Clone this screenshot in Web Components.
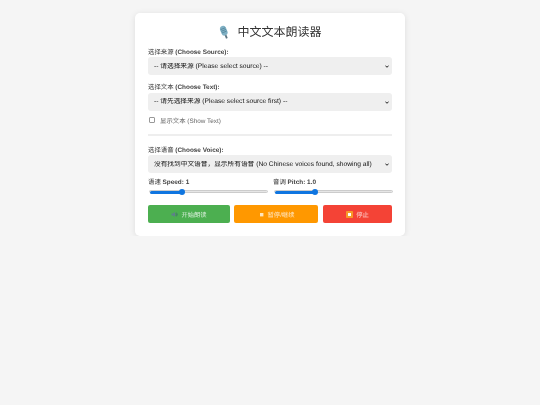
<!DOCTYPE html>
<html>
<head>
<meta charset="utf-8">
<title>中文文本朗读器</title>
<style>
    html, body { margin: 0; background: #f5f5f5; }
    body {
        font-family: "Liberation Sans", "Noto Sans CJK SC", sans-serif;
        padding-top: 13px;
        text-rendering: geometricPrecision;
    }
</style>
</head>
<body>
<duke-kort>
    <h-tittel>中文文本朗读器</h-tittel>
    <velg-felt kinesisk="选择来源" etikett="(Choose Source):" tekst="-- 请选择来源 (Please select source) --"></velg-felt>
    <velg-felt kinesisk="选择文本" etikett="(Choose Text):" tekst="-- 请先选择来源 (Please select source first) --"></velg-felt>
    <vis-tekst></vis-tekst>
    <skille-linje></skille-linje>
    <velg-felt kinesisk="选择语音" etikett="(Choose Voice):" tekst="没有找到中文语音，显示所有语音 (No Chinese voices found, showing all)"></velg-felt>
    <glider-rad></glider-rad>
    <knapp-rad></knapp-rad>
</duke-kort>
<script>
class DukeKort extends HTMLElement {
    constructor() {
        super()
        this.attachShadow({ mode: 'open' })
    }
    connectedCallback() {
        this.shadowRoot.innerHTML = `
            <style>
                :host {
                    display: block;
                    box-sizing: border-box;
                    width: 270px;
                    margin: 0 auto;
                    padding: 13px;
                    background: #fff;
                    border-radius: 5px;
                    box-shadow: 0 1px 6px rgba(0,0,0,0.1);
                    will-change: transform;
                }
            </style>
            <slot></slot>
        `
    }
}

class HTittel extends HTMLElement {
    constructor() {
        super()
        this.attachShadow({ mode: 'open' })
    }
    connectedCallback() {
        this.shadowRoot.innerHTML = `
            <style>
                :host {
                    display: flex;
                    justify-content: center;
                    align-items: center;
                    gap: 6px;
                    height: 13px;
                    margin-bottom: 8.5px;
                    font-size: 12px;
                    line-height: 13px;
                    color: #333;
                }
                svg { width: 13px; height: 15px; }
            </style>
            <svg viewBox="0 0 13 15">
                <g transform="rotate(-22 6.5 7.5)">
                    <rect x="3.4" y="0.6" width="6.2" height="10" rx="3.1" fill="#7fb0c4"/>
                    <path d="M4 3.4h5M4 5.2h5M4 7h5" stroke="#4f7f96" stroke-width=".7"/>
                    <rect x="5.6" y="10.4" width="1.8" height="3.4" fill="#5d7480"/>
                </g>
            </svg>
            <span><slot></slot></span>
        `
    }
}

class VelgFelt extends HTMLElement {
    constructor() {
        super()
        this.attachShadow({ mode: 'open' })
    }
    connectedCallback() {
        this.shadowRoot.innerHTML = `
            <style>
                :host { display: block; position: relative; margin-bottom: 8px; }
                label {
                    display: block;
                    font-size: 6.4px;
                    line-height: 9px;
                    font-weight: bold;
                    color: #444;
                    margin-bottom: .5px;
                }
                label span { font-weight: normal; color: #333; }
                select {
                    display: block;
                    appearance: none;
                    width: 100%;
                    height: 18px;
                    box-sizing: border-box;
                    border: none;
                    border-radius: 3px;
                    background-color: #efefef;
                    padding: 0 0 0 6px;
                    font: 6.7px "Liberation Sans", "Noto Sans CJK SC", sans-serif;
                    text-rendering: geometricPrecision;
                    color: #111;
                }
                svg {
                    position: absolute;
                    right: 3px;
                    bottom: 7px;
                    width: 4px;
                    height: 3px;
                    pointer-events: none;
                }
            </style>
            <label><span>${this.getAttribute('kinesisk')}</span> ${this.getAttribute('etikett')}</label>
            <select><option>${this.getAttribute('tekst')}</option></select>
            <svg viewBox="0 0 4 3"><path d="M.4.6L2 2.3 3.6.6" fill="none" stroke="#222" stroke-width="1"/></svg>
        `
    }
}

class VisTekst extends HTMLElement {
    constructor() {
        super()
        this.attachShadow({ mode: 'open' })
    }
    connectedCallback() {
        this.shadowRoot.innerHTML = `
            <style>
                :host {
                    display: flex;
                    align-items: center;
                    gap: 5px;
                    height: 8px;
                    margin-top: -2.5px;
                    padding-left: 1px;
                    font-size: 6.4px;
                    color: #666;
                }
                i {
                    display: block;
                    box-sizing: border-box;
                    width: 6px;
                    height: 6px;
                    border: .7px solid #999;
                    border-radius: 1px;
                    background: #fff;
                }
            </style>
            <i></i><span>显示文本 (Show Text)</span>
        `
    }
}

class SkilleLinje extends HTMLElement {
    constructor() {
        super()
        this.attachShadow({ mode: 'open' })
    }
    connectedCallback() {
        this.shadowRoot.innerHTML = `
            <style>
                :host {
                    display: block;
                    height: 2px;
                    margin: 10px 0 9.5px;
                    background: #eee;
                }
            </style>
        `
    }
}

class GliderRad extends HTMLElement {
    constructor() {
        super()
        this.attachShadow({ mode: 'open' })
    }
    glider(kinesisk, tekst, prosent) {
        return `
            <div class="glider">
                <div class="navn"><span>${kinesisk}</span> ${tekst}</div>
                <div class="spor">
                    <b style="width:${prosent}%"></b>
                    <u style="left:${prosent}%"></u>
                </div>
            </div>
        `
    }
    connectedCallback() {
        this.shadowRoot.innerHTML = `
            <style>
                :host {
                    display: grid;
                    grid-template-columns: 120px 120px;
                    gap: 5px;
                    width: 245px;
                    margin-top: -3px;
                    margin-bottom: 12px;
                }
                .navn {
                    font-size: 6.4px;
                    line-height: 9px;
                    font-weight: bold;
                    color: #444;
                    margin-bottom: 3px;
                }
                .navn span { font-weight: normal; color: #333; }
                .spor {
                    position: relative;
                    height: 3px;
                    margin-left: 1px;
                    background: #e6e6e6;
                    border: .5px solid #ccc;
                    border-radius: 2px;
                    box-sizing: border-box;
                }
                b {
                    position: absolute;
                    left: 0;
                    top: -.5px;
                    height: 3px;
                    background: #0f75e0;
                    border-radius: 2px;
                }
                u {
                    position: absolute;
                    top: -2px;
                    width: 6px;
                    height: 6px;
                    margin-left: -3px;
                    background: #0f75e0;
                    border-radius: 50%;
                }
            </style>
            ${this.glider('语速', 'Speed: 1', 27.5)}
            ${this.glider('音调', 'Pitch: 1.0', 34)}
        `
    }
}

class KnappRad extends HTMLElement {
    constructor() {
        super()
        this.attachShadow({ mode: 'open' })
    }
    connectedCallback() {
        this.shadowRoot.innerHTML = `
            <style>
                :host {
                    display: grid;
                    grid-template-columns: 82px 84px 69px;
                    justify-content: space-between;
                }
                div {
                    display: flex;
                    justify-content: center;
                    align-items: center;
                    gap: 3px;
                    height: 18px;
                    border-radius: 2px;
                    font-size: 6.3px;
                    color: rgba(255,255,255,.8);
                }
                svg { width: 7px; height: 7px; display: block; }
                .gronn { background: #4caf50; }
                .oransje { background: #ff9800; margin: 0 .5px 0 -.5px; }
                .rod { background: #f44336; }
            </style>
            <div class="gronn">
                <svg viewBox="0 0 7 7"><path d="M.5 2.5h1.6L4 1v5L2.1 4.5H.5z" fill="#5f7f8c"/><path d="M4.8 2.4q.9 1.1 0 2.2M5.5 1.6q1.5 1.9 0 3.8" stroke="#3d6070" stroke-width=".6" fill="none"/></svg>
                <span>开始朗读</span>
            </div>
            <div class="oransje">
                <svg viewBox="0 0 7 7"><rect x="2" y="2" width="3.4" height="3.4" fill="#ffe6bd"/></svg>
                <span>暂停/继续</span>
            </div>
            <div class="rod">
                <svg viewBox="0 0 7 7"><rect width="7" height="7" rx=".8" fill="#f79a2a"/><rect x="2" y="2" width="3" height="3" fill="#fff"/></svg>
                <span>停止</span>
            </div>
        `
    }
}

customElements.define('duke-kort', DukeKort)
customElements.define('h-tittel', HTittel)
customElements.define('velg-felt', VelgFelt)
customElements.define('vis-tekst', VisTekst)
customElements.define('skille-linje', SkilleLinje)
customElements.define('glider-rad', GliderRad)
customElements.define('knapp-rad', KnappRad)
</script>
</body>
</html>
